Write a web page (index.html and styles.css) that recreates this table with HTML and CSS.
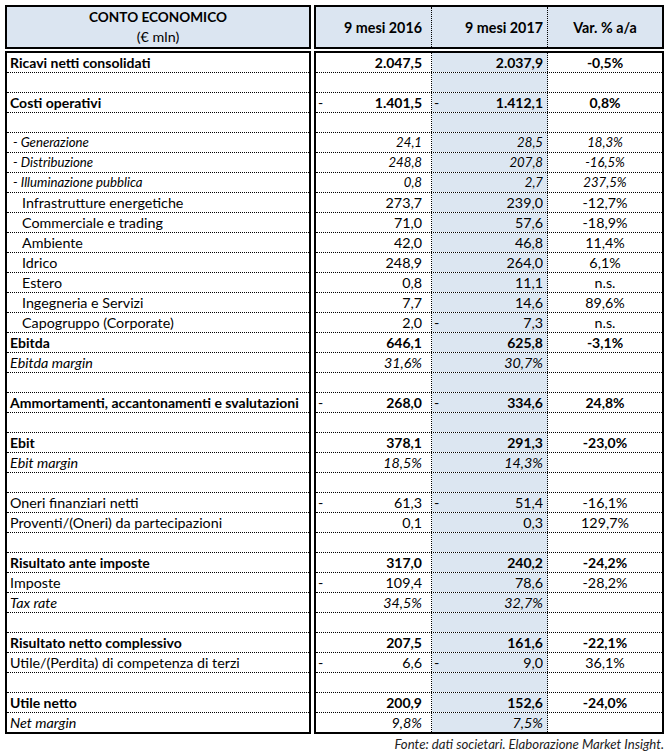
FILE: index.html
```html
<!DOCTYPE html>
<html lang="it">
<head>
<meta charset="utf-8">
<title>Conto economico</title>
<link rel="stylesheet" href="styles.css">
</head>
<body>
<div class="sheet">
  <div class="box head-left">
    <div class="title">CONTO ECONOMICO</div>
    <div class="unit">(€ mln)</div>
  </div>
  <div class="box head-right">
    <div class="hc c1">9 mesi 2016</div>
    <div class="hc c2">9 mesi 2017</div>
    <div class="hc c3">Var. % a/a</div>
  </div>

  <div class="box labels">
    <div class="r b">Ricavi netti consolidati</div>
    <div class="r"></div>
    <div class="r b">Costi operativi</div>
    <div class="r"></div>
    <div class="r s">- Generazione</div>
    <div class="r s">- Distribuzione</div>
    <div class="r s">- Illuminazione pubblica</div>
    <div class="r ind">Infrastrutture energetiche</div>
    <div class="r ind">Commerciale e trading</div>
    <div class="r ind">Ambiente</div>
    <div class="r ind">Idrico</div>
    <div class="r ind">Estero</div>
    <div class="r ind">Ingegneria e Servizi</div>
    <div class="r ind">Capogruppo (Corporate)</div>
    <div class="r b">Ebitda</div>
    <div class="r i">Ebitda margin</div>
    <div class="r"></div>
    <div class="r b">Ammortamenti, accantonamenti e svalutazioni</div>
    <div class="r"></div>
    <div class="r b">Ebit</div>
    <div class="r i">Ebit margin</div>
    <div class="r"></div>
    <div class="r">Oneri finanziari netti</div>
    <div class="r">Proventi/(Oneri) da partecipazioni</div>
    <div class="r"></div>
    <div class="r b">Risultato ante imposte</div>
    <div class="r">Imposte</div>
    <div class="r i">Tax rate</div>
    <div class="r"></div>
    <div class="r b">Risultato netto complessivo</div>
    <div class="r">Utile/(Perdita) di competenza di terzi</div>
    <div class="r"></div>
    <div class="r b">Utile netto</div>
    <div class="r i">Net margin</div>
  </div>

  <div class="box values">
    <div class="r b"><span class="c1">2.047,5</span><span class="c2">2.037,9</span><span class="c3">-0,5%</span></div>
    <div class="r"><span class="c1"></span><span class="c2"></span><span class="c3"></span></div>
    <div class="r b"><span class="c1"><span class="neg">-</span>1.401,5</span><span class="c2"><span class="neg">-</span>1.412,1</span><span class="c3">0,8%</span></div>
    <div class="r"><span class="c1"></span><span class="c2"></span><span class="c3"></span></div>
    <div class="r s"><span class="c1">24,1</span><span class="c2">28,5</span><span class="c3">18,3%</span></div>
    <div class="r s"><span class="c1">248,8</span><span class="c2">207,8</span><span class="c3">-16,5%</span></div>
    <div class="r s"><span class="c1">0,8</span><span class="c2">2,7</span><span class="c3">237,5%</span></div>
    <div class="r"><span class="c1">273,7</span><span class="c2">239,0</span><span class="c3">-12,7%</span></div>
    <div class="r"><span class="c1">71,0</span><span class="c2">57,6</span><span class="c3">-18,9%</span></div>
    <div class="r"><span class="c1">42,0</span><span class="c2">46,8</span><span class="c3">11,4%</span></div>
    <div class="r"><span class="c1">248,9</span><span class="c2">264,0</span><span class="c3">6,1%</span></div>
    <div class="r"><span class="c1">0,8</span><span class="c2">11,1</span><span class="c3">n.s.</span></div>
    <div class="r"><span class="c1">7,7</span><span class="c2">14,6</span><span class="c3">89,6%</span></div>
    <div class="r"><span class="c1">2,0</span><span class="c2"><span class="neg">-</span>7,3</span><span class="c3">n.s.</span></div>
    <div class="r b"><span class="c1">646,1</span><span class="c2">625,8</span><span class="c3">-3,1%</span></div>
    <div class="r i"><span class="c1">31,6%</span><span class="c2">30,7%</span><span class="c3"></span></div>
    <div class="r"><span class="c1"></span><span class="c2"></span><span class="c3"></span></div>
    <div class="r b"><span class="c1"><span class="neg">-</span>268,0</span><span class="c2"><span class="neg">-</span>334,6</span><span class="c3">24,8%</span></div>
    <div class="r"><span class="c1"></span><span class="c2"></span><span class="c3"></span></div>
    <div class="r b"><span class="c1">378,1</span><span class="c2">291,3</span><span class="c3">-23,0%</span></div>
    <div class="r i"><span class="c1">18,5%</span><span class="c2">14,3%</span><span class="c3"></span></div>
    <div class="r"><span class="c1"></span><span class="c2"></span><span class="c3"></span></div>
    <div class="r"><span class="c1"><span class="neg">-</span>61,3</span><span class="c2"><span class="neg">-</span>51,4</span><span class="c3">-16,1%</span></div>
    <div class="r"><span class="c1">0,1</span><span class="c2">0,3</span><span class="c3">129,7%</span></div>
    <div class="r"><span class="c1"></span><span class="c2"></span><span class="c3"></span></div>
    <div class="r b"><span class="c1">317,0</span><span class="c2">240,2</span><span class="c3">-24,2%</span></div>
    <div class="r"><span class="c1"><span class="neg">-</span>109,4</span><span class="c2">78,6</span><span class="c3">-28,2%</span></div>
    <div class="r i"><span class="c1">34,5%</span><span class="c2">32,7%</span><span class="c3"></span></div>
    <div class="r"><span class="c1"></span><span class="c2"></span><span class="c3"></span></div>
    <div class="r b"><span class="c1">207,5</span><span class="c2">161,6</span><span class="c3">-22,1%</span></div>
    <div class="r"><span class="c1"><span class="neg">-</span>6,6</span><span class="c2"><span class="neg">-</span>9,0</span><span class="c3">36,1%</span></div>
    <div class="r"><span class="c1"></span><span class="c2"></span><span class="c3"></span></div>
    <div class="r b"><span class="c1">200,9</span><span class="c2">152,6</span><span class="c3">-24,0%</span></div>
    <div class="r i"><span class="c1">9,8%</span><span class="c2">7,5%</span><span class="c3"></span></div>
  </div>
</div>
<p class="source">Fonte: dati societari. Elaborazione Market Insight.</p>
</body>
</html>
```

FILE: styles.css
```css
html, body {
  margin: 0;
  padding: 0;
  background: #fff;
}

body {
  padding: 5px 0 0 5px;
  font-family: Lato, "Open Sans", sans-serif;
  font-size: 14.3px;
  color: #000;
}

.sheet {
  display: grid;
  grid-template-columns: 306px 350px;
  column-gap: 3px;
  row-gap: 2px;
}

.box {
  border: 2px solid #000;
}

.head-left {
  height: 40px;
  background: #dbe5f1;
  display: flex;
  flex-direction: column;
  align-items: center;
  justify-content: center;
  line-height: 20px;
}

.head-left .title {
  font-weight: bold;
  font-size: 13.6px;
}

.head-right {
  height: 40px;
  background: #dbe5f1;
  display: grid;
  grid-template-columns: 116px 116px 1fr;
  font-weight: bold;
}

.hc {
  display: flex;
  align-items: center;
  justify-content: flex-end;
  border-right: 1px dotted #000;
}

.hc.c1 { padding-right: 9px; }
.hc.c2 { padding-right: 4px; }
.hc.c3 { justify-content: center; border-right: 0; }

.r {
  height: 19px;
  line-height: 19px;
  border-bottom: 1px dotted #000;
  white-space: nowrap;
}

.r:last-child {
  border-bottom: 0;
}

.labels .r {
  padding-left: 3px;
}

.labels .r.ind {
  padding-left: 15px;
}

.labels .r.s {
  padding-left: 6px;
}

.b { font-weight: bold; font-size: 14px; }
.i { font-style: italic; }
.s { font-style: italic; font-size: 13.2px; }

.values .r {
  display: grid;
  grid-template-columns: 116px 116px 1fr;
}

.c1, .c2, .c3 {
  display: flex;
  justify-content: flex-end;
  align-items: center;
}

.values .c1 {
  padding-right: 9px;
  border-right: 1px dotted #000;
}

.values .c2 {
  padding-right: 4px;
  border-right: 1px dotted #000;
  background: #dce6f1;
}

.values .c3 {
  justify-content: center;
}

.neg {
  margin-right: auto;
  padding-left: 2px;
  font-weight: normal;
}

.source {
  margin: 2px 0 0;
  width: 659px;
  text-align: right;
  font-style: italic;
  font-size: 13.2px;
  color: #222;
}
```
